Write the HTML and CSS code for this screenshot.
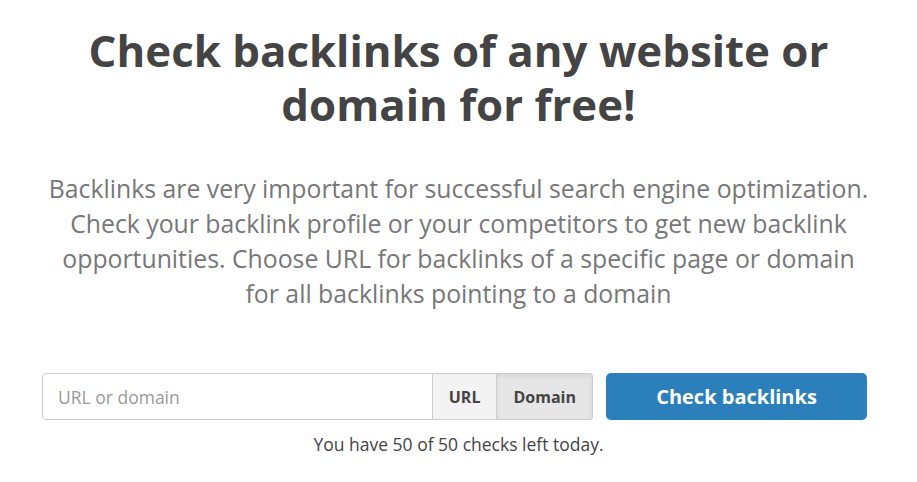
FILE: index.html
```html
<!DOCTYPE html>
<html lang="en">
<head>
    <meta charset="UTF-8">
    <meta name="viewport" content="width=device-width, initial-scale=1.0">
    <title>Backlink Checker</title>
    <link rel="stylesheet" href="styles.css">
</head>
<body>
    <div class="hero">
        <h1>Check backlinks of any website or domain for free!</h1>
        <p class="lead">Backlinks are very important for successful search engine optimization. Check your backlink profile or your competitors to get new backlink opportunities. Choose URL for backlinks of a specific page or domain for all backlinks pointing to a domain</p>

        <form class="check-form" onsubmit="return false">
            <div class="input-group">
                <input type="text" class="url-input" placeholder="URL or domain">
                <button type="button" class="mode-button">URL</button>
                <button type="button" class="mode-button active">Domain</button>
            </div>
            <button type="submit" class="check-button">Check backlinks</button>
        </form>
        <div class="checks-left">You have 50 of 50 checks left today.</div>
    </div>
</body>
</html>
```

FILE: styles.css
```css
body {
    font-family: "Open Sans", "Noto Sans", sans-serif;
    margin: 0;
    background-color: #fff;
    color: #444;
}
.hero {
    max-width: 840px;
    margin: 0 auto;
    padding: 23px 0 20px;
    text-align: center;
}
h1 {
    font-size: 43.8px;
    font-weight: 700;
    line-height: 54px;
    margin: 0 0 40px;
    color: #444;
}
.lead {
    max-width: 822px;
    font-size: 24.8px;
    line-height: 35px;
    color: #777;
    margin: 0 auto 62px;
}
.check-form {
    display: flex;
    gap: 13px;
    width: 825px;
    margin-left: 3.5px;
}
.input-group {
    display: flex;
    flex: 1;
}
.url-input {
    flex: 1;
    min-width: 0;
    height: 47px;
    box-sizing: border-box;
    border: 1px solid #ccc;
    border-radius: 4px 0 0 4px;
    padding: 0 15px;
    font-family: inherit;
    font-size: 17.5px;
    color: #444;
}
.url-input::placeholder {
    color: #999;
}
.mode-button {
    height: 47px;
    border: 1px solid #ccc;
    border-left: none;
    background-color: #f3f3f3;
    color: #444;
    font-family: inherit;
    font-size: 16px;
    font-weight: 700;
    padding: 0 16px;
    cursor: pointer;
}
.mode-button.active {
    background-color: #e6e6e6;
    box-shadow: inset 0 2px 4px rgba(0,0,0,0.08);
    border-radius: 0 4px 4px 0;
}
.check-button {
    width: 261px;
    height: 47px;
    border: none;
    border-radius: 5px;
    background-color: #2b7fba;
    color: #fff;
    font-family: inherit;
    font-size: 20px;
    font-weight: 700;
    cursor: pointer;
}
.checks-left {
    font-size: 17.5px;
    margin-top: 12px;
    color: #444;
}
```
